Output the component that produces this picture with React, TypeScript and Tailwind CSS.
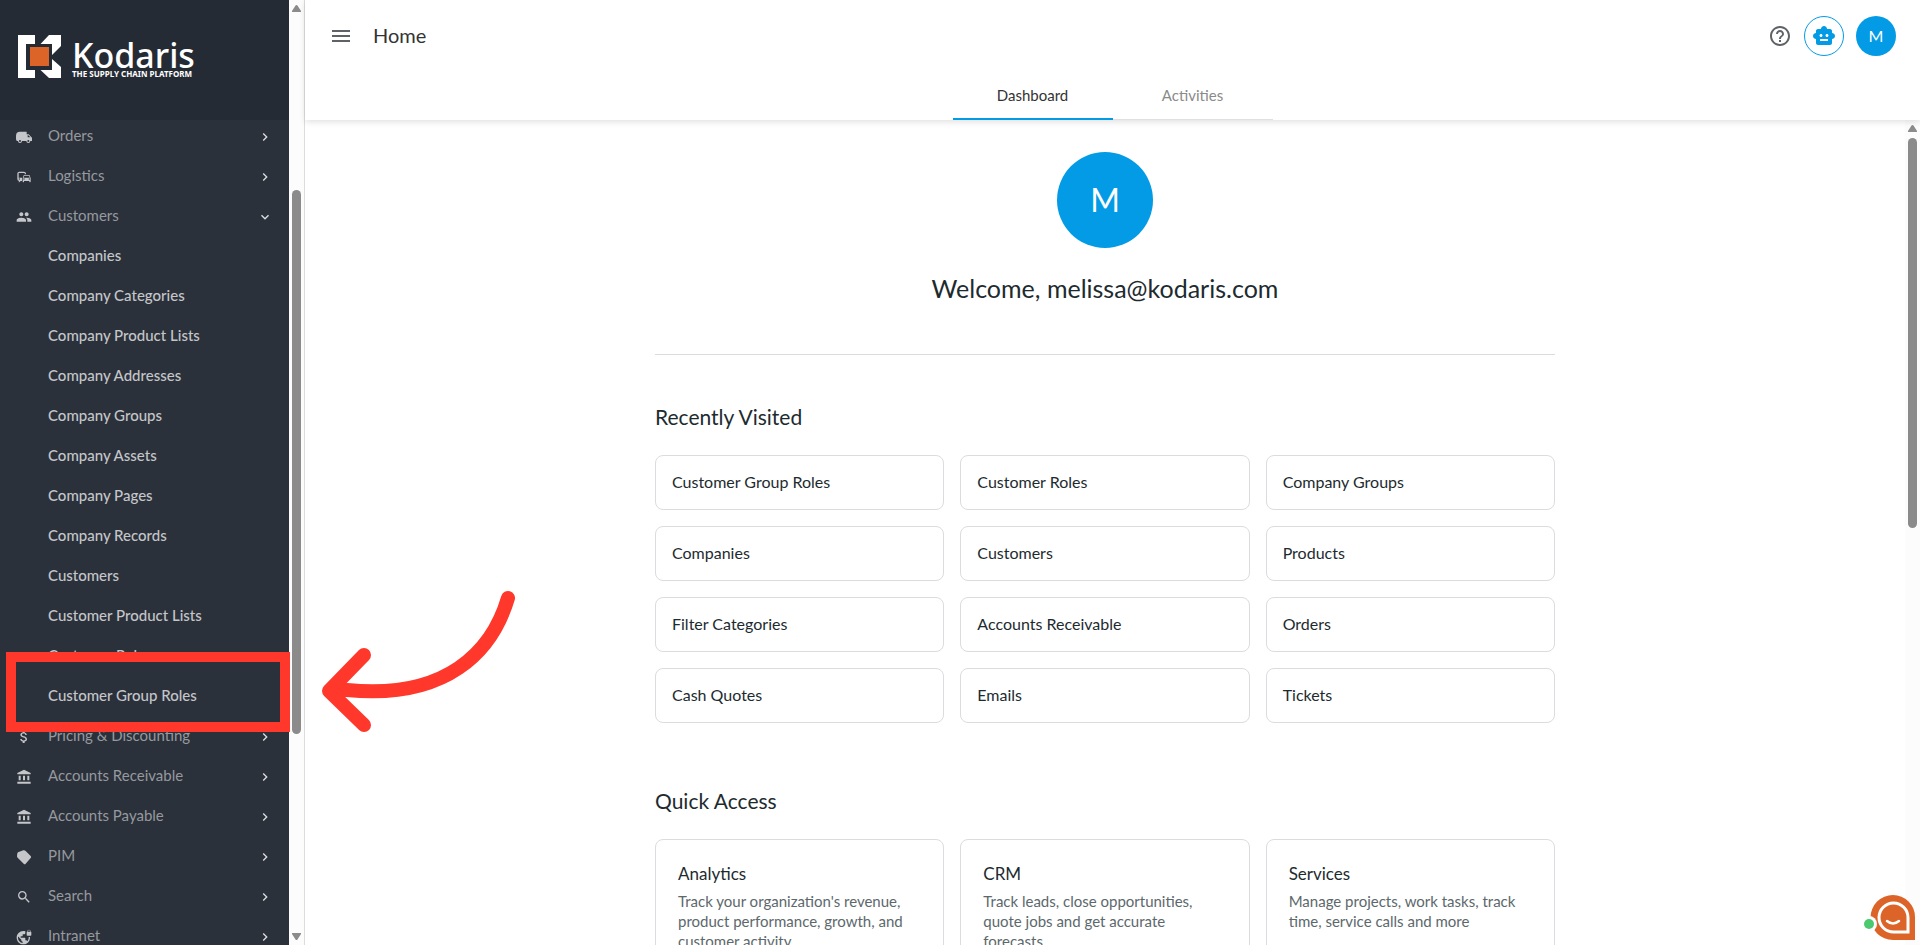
import React from 'react';
import type { IconType } from 'react-icons';
import {
  MdAccountBalance,
  MdAttachMoney,
  MdChevronRight,
  MdCommute,
  MdExpandMore,
  MdHelpOutline,
  MdMenu,
  MdPeople,
  MdSearch,
  MdSmartToy,
  MdVpnLock,
} from 'react-icons/md';

interface NavSection {
  label: string;
  icon: IconType | typeof TruckIcon;
  children?: string[];
}

function TruckIcon({ className }: { className?: string }) {
  return (
    <svg viewBox="0 0 24 24" fill="currentColor" className={className} aria-hidden="true">
      <path
        fillRule="evenodd"
        d="M6 4H16V8H19L24 13V18H21.500A3 3 0 0 1 15.500 18H9A3 3 0 0 1 3 18H2Q0 18 0 15V10Q0 4 6 4ZM17.500 9.500V12.500H21.500L18.500 9.500ZM6 16.500A1.500 1.500 0 1 0 6 19.500A1.500 1.500 0 1 0 6 16.500ZM18.500 16.500A1.500 1.500 0 1 0 18.500 19.500A1.500 1.500 0 1 0 18.500 16.500Z"
      />
    </svg>
  );
}

function TagIcon({ className }: { className?: string }) {
  return (
    <svg viewBox="0 0 24 24" fill="currentColor" className={className} aria-hidden="true">
      <path d="M5 4L11 2Q13 1.500 14.500 3L22 10.500Q23.500 12 22 13.500L14.500 22Q13 23.500 11.500 22L2.500 13Q1.500 12 1.500 10.500L2 6.500Q2.500 4.500 5 4Z" />
    </svg>
  );
}

const sections: NavSection[] = [
  { label: 'Orders', icon: TruckIcon },
  { label: 'Logistics', icon: MdCommute },
  {
    label: 'Customers',
    icon: MdPeople,
    children: [
      'Companies',
      'Company Categories',
      'Company Product Lists',
      'Company Addresses',
      'Company Groups',
      'Company Assets',
      'Company Pages',
      'Company Records',
      'Customers',
      'Customer Product Lists',
      'Customer Roles',
      'Customer Group Roles',
    ],
  },
  { label: 'Pricing & Discounting', icon: MdAttachMoney },
  { label: 'Accounts Receivable', icon: MdAccountBalance },
  { label: 'Accounts Payable', icon: MdAccountBalance },
  { label: 'PIM', icon: TagIcon },
  { label: 'Search', icon: MdSearch },
  { label: 'Intranet', icon: MdVpnLock },
];

const recentlyVisited = [
  'Customer Group Roles',
  'Customer Roles',
  'Company Groups',
  'Companies',
  'Customers',
  'Products',
  'Filter Categories',
  'Accounts Receivable',
  'Orders',
  'Cash Quotes',
  'Emails',
  'Tickets',
];

const quickAccess = [
  {
    title: 'Analytics',
    text: "Track your organization's revenue, product performance, growth, and customer activity",
  },
  {
    title: 'CRM',
    text: 'Track leads, close opportunities, quote jobs and get accurate forecasts',
  },
  {
    title: 'Services',
    text: 'Manage projects, work tasks, track time, service calls and more',
  },
];

function Logo() {
  return (
    <a href="#home" className="flex items-end gap-[11px] text-white">
      <svg width="43" height="43" viewBox="0 0 43 43" aria-hidden="true">
        <path fill="#fff" d="M0 0H17V9H8V35H17V43H0Z" />
        <path fill="#fff" d="M22.500 9L31 0H43V11L34 20V9Z" />
        <path fill="#fff" d="M34 24L43 32V43H31L22.500 35H34Z" />
        <rect x="12" y="12" width="19" height="19" fill="#dc6428" />
      </svg>
      <span className="flex flex-col font-['Noto_Sans',sans-serif]">
        <span className="text-[34px] leading-[30px] font-medium">Kodaris</span>
        <span className="text-[8px] leading-[8px] font-bold">THE SUPPLY CHAIN PLATFORM</span>
      </span>
    </a>
  );
}

function ScrollArrow({ down = false }: { down?: boolean }) {
  return (
    <svg width="9" height="7" viewBox="0 0 9 7" className="shrink-0" aria-hidden="true">
      <path
        fill="#8b8b8b"
        d={down ? 'M0 0H9V1L5.500 6.500Q4.500 7.500 3.500 6.500L0 1Z' : 'M0 7H9V6L5.500 0.500Q4.500 -0.500 3.500 0.500L0 6Z'}
      />
    </svg>
  );
}

function Sidebar() {
  return (
    <aside className="flex w-[289px] shrink-0 flex-col bg-[#2b313b]">
      <div className="z-10 h-[120px] shrink-0 bg-[#252b34] pt-[35px] pl-[18px]">
        <Logo />
      </div>
      <nav className="-mt-1 min-h-0 flex-1 overflow-hidden text-[15px]">
        {sections.map((section) => {
          const Icon = section.icon;
          const Arrow = section.children ? MdExpandMore : MdChevronRight;
          return (
            <div key={section.label}>
              <button className="flex h-10 w-full items-center px-4 pt-0.5 text-left text-[#96999e]">
                <Icon className="mr-4 size-4 text-[#c4c6c9]" />
                <span className="flex-1 pb-1">{section.label}</span>
                <Arrow className="size-4 text-[#dcdddf]" />
              </button>
              {section.children?.map((child) => (
                <a
                  key={child}
                  href="#customers"
                  className="flex h-10 items-center pb-0.5 pl-12 font-medium text-[#c4c6c9]"
                >
                  {child}
                </a>
              ))}
            </div>
          );
        })}
      </nav>
    </aside>
  );
}

function Header() {
  return (
    <header className="z-10 flex h-[120px] shrink-0 flex-col bg-white shadow-[0_2px_6px_rgba(0,0,0,0.12)]">
      <div className="flex h-[72px] items-center px-6 text-[#5f6368]">
        <button aria-label="Toggle menu">
          <MdMenu className="size-6" />
        </button>
        <h1 className="ml-5 flex-1 pb-0.5 text-xl text-[#333]">Home</h1>
        <button aria-label="Help" className="mr-3">
          <MdHelpOutline className="size-6" />
        </button>
        <button
          aria-label="Assistant"
          className="mr-3 flex size-10 items-center justify-center rounded-full border border-[#039be5] text-[#039be5]"
        >
          <MdSmartToy className="size-6" />
        </button>
        <button className="size-10 rounded-full bg-[#039be5] text-base text-white">M</button>
      </div>
      <div role="tablist" className="flex h-12 justify-center text-[15px]">
        <button
          role="tab"
          aria-selected="true"
          className="w-40 border-b-2 border-[#039be5] text-[#333]"
        >
          Dashboard
        </button>
        <button
          role="tab"
          aria-selected="false"
          className="w-40 border-b border-[#e0e0e0] pb-px text-[#8a8a8a]"
        >
          Activities
        </button>
      </div>
    </header>
  );
}

function Dashboard() {
  return (
    <main className="min-w-0 flex-1 overflow-hidden text-[#1d2b2f]">
      <div className="mx-auto flex max-w-[900px] flex-col">
        <div className="mt-8 flex size-24 items-center justify-center self-center rounded-full bg-[#039be5] text-[32px] text-white">
          M
        </div>
        <h2 className="mt-6 text-center text-[25px] leading-8">Welcome, melissa@kodaris.com</h2>
        <hr className="mt-[50px] border-[#dcdcdf]" />

        <h3 className="mt-12 text-[21px] leading-7">Recently Visited</h3>
        <div className="mt-6 grid grid-cols-3 gap-4">
          {recentlyVisited.map((label) => (
            <a
              key={label}
              href="#recent"
              className="flex h-[55px] items-center rounded-lg border border-[#dcdcdf] px-4 pb-0.5 text-base"
            >
              {label}
            </a>
          ))}
        </div>

        <h3 className="mt-16 text-[21px] leading-7">Quick Access</h3>
        <div className="mt-6 grid grid-cols-3 gap-4">
          {quickAccess.map((card) => (
            <a key={card.title} href="#quick" className="rounded-lg border border-[#dcdcdf] px-[22px] py-6">
              <h4 className="text-[17px] leading-5">{card.title}</h4>
              <p className="mt-[7px] text-[15px] leading-5 text-[#5c686c]">{card.text}</p>
            </a>
          ))}
        </div>
      </div>
    </main>
  );
}

// Hand-drawn arrow and frame that point out the current menu entry
function Annotation() {
  return (
    <>
      <div className="pointer-events-none absolute top-[652px] left-[6px] z-20 h-20 w-[284px] border-10 border-[#ff382b]" />
      <svg
        className="pointer-events-none absolute top-[590px] left-[320px] z-20"
        width="200"
        height="145"
        viewBox="0 0 200 145"
        fill="none"
        stroke="#ff382b"
        strokeWidth="14"
        strokeLinecap="round"
        strokeLinejoin="round"
        aria-hidden="true"
      >
        <path d="M188 8C172 62 126 110 27 100H12" />
        <path d="M44 65L9 101L44 135" />
      </svg>
    </>
  );
}

function ChatLauncher() {
  return (
    <button aria-label="Open chat" className="absolute right-0 bottom-0 z-20">
      <svg width="60" height="55" viewBox="0 0 60 55" aria-hidden="true">
        <path fill="#dc6428" d="M33 5A22 22 0 0 1 55 27V50H33A22.500 22.500 0 0 1 33 5Z" />
        <path
          fill="none"
          stroke="#fff"
          strokeWidth="3"
          d="M33.500 13A14.500 14.500 0 0 1 48 27.500V42H33.500A14.500 14.500 0 0 1 33.500 13Z"
        />
        <path fill="none" stroke="#fff" strokeWidth="2.5" strokeLinecap="round" d="M27 31Q33 36 39 31" />
        <circle cx="9" cy="34" r="8" fill="#fff" />
        <circle cx="9" cy="34" r="5" fill="#4cc96f" />
      </svg>
    </button>
  );
}

export default function App() {
  return (
    <div className="relative flex h-screen overflow-hidden bg-white font-['Lato',sans-serif]">
      <Sidebar />
      <div className="flex w-4 shrink-0 flex-col items-center border-r border-[#dcdcdc] bg-[#fcfcfc] py-[5px]">
        <ScrollArrow />
        <div className="flex w-[9px] flex-1 flex-col pt-[178px] pb-[199px]">
          <div className="flex-1 rounded-full bg-[#8b8b8b]" />
        </div>
        <ScrollArrow down />
      </div>
      <div className="flex min-w-0 flex-1 flex-col">
        <Header />
        <div className="flex min-h-0 flex-1">
          <Dashboard />
          <div className="flex w-[15px] shrink-0 flex-col items-center gap-[6px] bg-[#fcfcfc] pt-[5px]">
            <ScrollArrow />
            <div className="h-[390px] w-[9px] rounded-full bg-[#8b8b8b]" />
          </div>
        </div>
      </div>
      <Annotation />
      <ChatLauncher />
    </div>
  );
}
